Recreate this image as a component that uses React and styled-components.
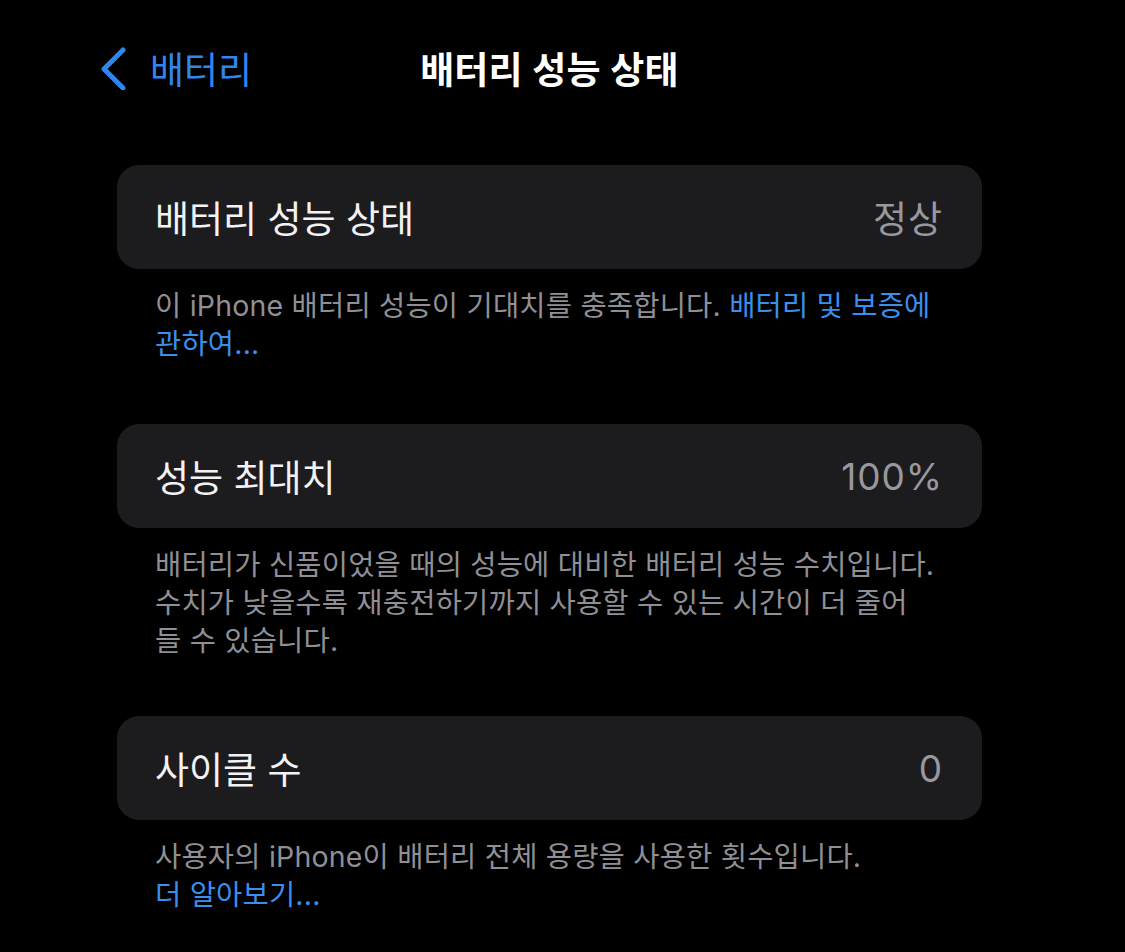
import React from "react";
import styled, { createGlobalStyle } from "styled-components";

const Global = createGlobalStyle`
  html, body { margin: 0; padding: 0; background: #000; }
  body {
    font-family: "Inter", "Noto Sans CJK KR", sans-serif;
    -webkit-font-smoothing: antialiased;
  }
`;

const Page = styled.div`
  width: 1125px;
  min-height: 952px;
  background: #000;
  box-sizing: border-box;
  padding: 0 143px 0 117px;
`;

const Nav = styled.div`
  display: grid;
  grid-template-columns: 1fr auto 1fr;
  align-items: center;
  margin: 0 -17px;
  padding-bottom: 29px;
  box-sizing: border-box;
  height: 165px;
`;

const Back = styled.div`
  display: flex;
  align-items: center;
  gap: 22px;
  color: #2f86ee;
  font-size: 37px;
`;

const Title = styled.div`
  color: #fff;
  font-size: 37px;
  font-weight: 600;
  letter-spacing: 0.2px;
`;

const Card = styled.div`
  display: flex;
  align-items: center;
  justify-content: space-between;
  height: 104px;
  padding: 0 39px 0 38px;
  background: #1c1c1e;
  border-radius: 22px;
`;

const Label = styled.span`
  color: #f2f2f5;
  font-size: 37px;
`;

const Value = styled.span`
  color: #98989e;
  font-size: 37px;
  letter-spacing: 0.9px;
`;

const Footer = styled.p`
  margin: 0;
  padding: 18px 30px 0 38px;
  margin-bottom: ${(p) => p.$after}px;
  color: #8f8f95;
  font-size: 28.5px;
  letter-spacing: 0.2px;
  line-height: 38px;
  white-space: nowrap;
`;

const Link = styled.span`
  color: #3a8eec;
`;

export default function App() {
  return (
    <>
      <Global />
      <Page>
        <Nav>
          <Back>
            <svg width="28" height="44" viewBox="0 0 28 44">
              <polyline
                points="23,4 4,23 23,42"
                fill="none"
                stroke="#2f86ee"
                strokeWidth="5"
                strokeLinecap="round"
                strokeLinejoin="round"
              />
            </svg>
            <span>배터리</span>
          </Back>
          <Title>배터리 성능 상태</Title>
          <div />
        </Nav>

        <Card>
          <Label>배터리 성능 상태</Label>
          <Value>정상</Value>
        </Card>
        <Footer $after={61}>
          이 iPhone 배터리 성능이 기대치를 충족합니다. <Link>배터리 및 보증에</Link>
          <br />
          <Link>관하여...</Link>
        </Footer>

        <Card>
          <Label>성능 최대치</Label>
          <Value>100%</Value>
        </Card>
        <Footer $after={56}>
          배터리가 신품이었을 때의 성능에 대비한 배터리 성능 수치입니다.
          <br />
          수치가 낮을수록 재충전하기까지 사용할 수 있는 시간이 더 줄어
          <br />
          들 수 있습니다.
        </Footer>

        <Card>
          <Label>사이클 수</Label>
          <Value>0</Value>
        </Card>
        <Footer $after={0}>
          사용자의 iPhone이 배터리 전체 용량을 사용한 횟수입니다.
          <br />
          <Link>더 알아보기...</Link>
        </Footer>
      </Page>
    </>
  );
}
